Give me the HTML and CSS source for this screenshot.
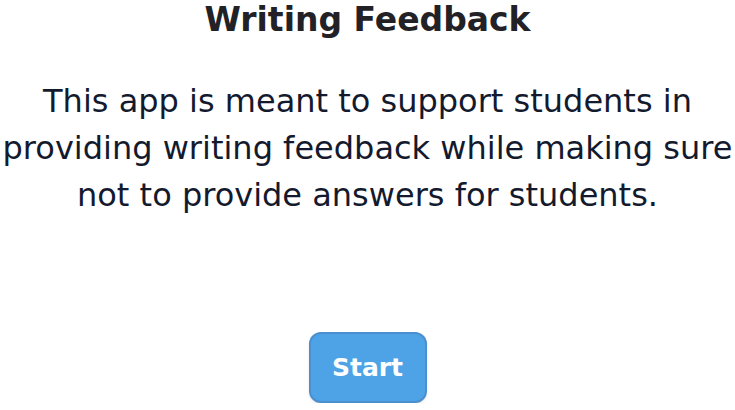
FILE: index.html
```html
<!DOCTYPE html>
<html lang="en">
<head>
<meta charset="utf-8">
<title>Writing Feedback</title>
<link rel="stylesheet" href="styles.css">
</head>
<body>
<main class="page">
  <h1 class="title">Writing Feedback</h1>
  <p class="intro">This app is meant to support students in<br>providing writing feedback while making sure<br>not to provide answers for students.</p>
  <button class="start" type="button">Start</button>
</main>
</body>
</html>
```

FILE: styles.css
```css
html, body {
  margin: 0;
  padding: 0;
  background: #ffffff;
}

.page {
  width: 735px;
  display: flex;
  flex-direction: column;
  align-items: center;
  font-family: "DejaVu Sans", "Noto Sans", sans-serif;
}

.title {
  margin: 0;
  font-size: 33px;
  line-height: 39px;
  font-weight: 700;
  color: #222226;
  white-space: nowrap;
}

.intro {
  margin: 39px 0 0;
  font-size: 32px;
  line-height: 47px;
  font-weight: 400;
  color: #141a2e;
  text-align: center;
  white-space: nowrap;
}

.start {
  margin-top: 113px;
  width: 118px;
  height: 71px;
  box-sizing: border-box;
  border: 2px solid #4a90d0;
  border-radius: 12px;
  background: #4ea3e6;
  color: #ffffff;
  font-family: "DejaVu Sans", "Noto Sans", sans-serif;
  font-size: 25px;
  font-weight: 700;
  box-shadow: 0 1px 2px rgba(0,0,0,0.15);
}
```
